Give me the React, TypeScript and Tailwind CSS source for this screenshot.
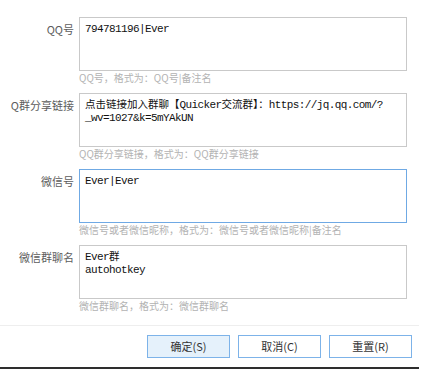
import React from "react";

const CJK = /[\u3000-\u303f\u3400-\u9fff\uff00-\uffef\u2000-\u206f]/;

function Mixed({ text }: { text: string }) {
  const parts: { s: string; cjk: boolean }[] = [];
  for (const ch of text) {
    const c = CJK.test(ch);
    const last = parts[parts.length - 1];
    if (last && last.cjk === c) last.s += ch;
    else parts.push({ s: ch, cjk: c });
  }
  return (
    <>
      {parts.map((p, i) =>
        p.cjk ? (
          <span key={i} className="text-[10.5px] [font-family:'Noto_Sans_CJK_SC',sans-serif]">
            {p.s}
          </span>
        ) : (
          <span key={i} className="text-[11px] tracking-[-0.6px] [font-family:'Liberation_Mono',monospace] whitespace-pre">
            {p.s}
          </span>
        )
      )}
    </>
  );
}

function Row({
  label,
  lines,
  hint,
  focused,
}: {
  label: string;
  lines: string[];
  hint: string;
  focused?: boolean;
}) {
  return (
    <div className="flex items-start mb-[8px]">
      <div className="w-[74px] text-right text-[11px] leading-[13px] pt-[6px] text-[#5c5c5c] [font-family:'Noto_Sans_CJK_SC',sans-serif] whitespace-nowrap">
        {label}
      </div>
      <div className="ml-[5px] w-[328px] flex flex-col">
        <div
          className={
            focused
              ? "h-[54px] border border-[#6fa9e4] bg-white pl-[5px] pt-[2px] text-[#111]"
              : "h-[54px] border border-[#c9c9c9] bg-white pl-[5px] pt-[2px] text-[#111]"
          }
        >
          {lines.map((l, i) => (
            <div key={i} className="leading-[13px] h-[13px] whitespace-nowrap">
              <Mixed text={l} />
            </div>
          ))}
        </div>
        <div className="h-[14px] leading-[14px] text-[10px] text-[#b3b3b3] [font-family:'Noto_Sans_CJK_SC',sans-serif] whitespace-nowrap">
          {hint}
        </div>
      </div>
    </div>
  );
}

function Btn({ children, primary }: { children: React.ReactNode; primary?: boolean }) {
  return (
    <div
      className={
        primary
          ? "w-[83px] h-[23px] border border-[#7db3e9] bg-[#e5f1fb] flex items-center justify-center text-[11px] text-[#333] [font-family:'Noto_Sans_CJK_SC',sans-serif]"
          : "w-[83px] h-[23px] border border-[#7db3e9] bg-white flex items-center justify-center text-[11px] text-[#333] [font-family:'Noto_Sans_CJK_SC',sans-serif]"
      }
    >
      {children}
    </div>
  );
}

export default function App() {
  return (
    <div className="w-[442px] h-[369px] bg-white overflow-hidden">
      <div className="w-[419px] h-[369px] flex flex-col">
        <div className="pt-[17px] flex flex-col">
          <Row label="QQ号" lines={["794781196|Ever"]} hint="QQ号，格式为：QQ号|备注名" />
          <Row
            label="Q群分享链接"
            lines={["点击链接加入群聊【Quicker交流群】：https://jq.qq.com/?", "_wv=1027&k=5mYAkUN"]}
            hint="QQ群分享链接，格式为：QQ群分享链接"
          />
          <Row
            label="微信号"
            lines={["Ever|Ever"]}
            hint="微信号或者微信昵称，格式为：微信号或者微信昵称|备注名"
            focused
          />
          <Row label="微信群聊名" lines={["Ever群", "autohotkey"]} hint="微信群聊名，格式为：微信群聊名" />
        </div>
        <div className="mt-[4px] h-[1px] bg-[#eeeeee]" />
        <div className="mt-[9px] flex justify-end gap-[8px] pr-[7px]">
          <Btn primary>确定(S)</Btn>
          <Btn>取消(C)</Btn>
          <Btn>重置(R)</Btn>
        </div>
        <div className="mt-[9px] h-[2px] bg-[#2e2e2e]" />
      </div>
    </div>
  );
}
